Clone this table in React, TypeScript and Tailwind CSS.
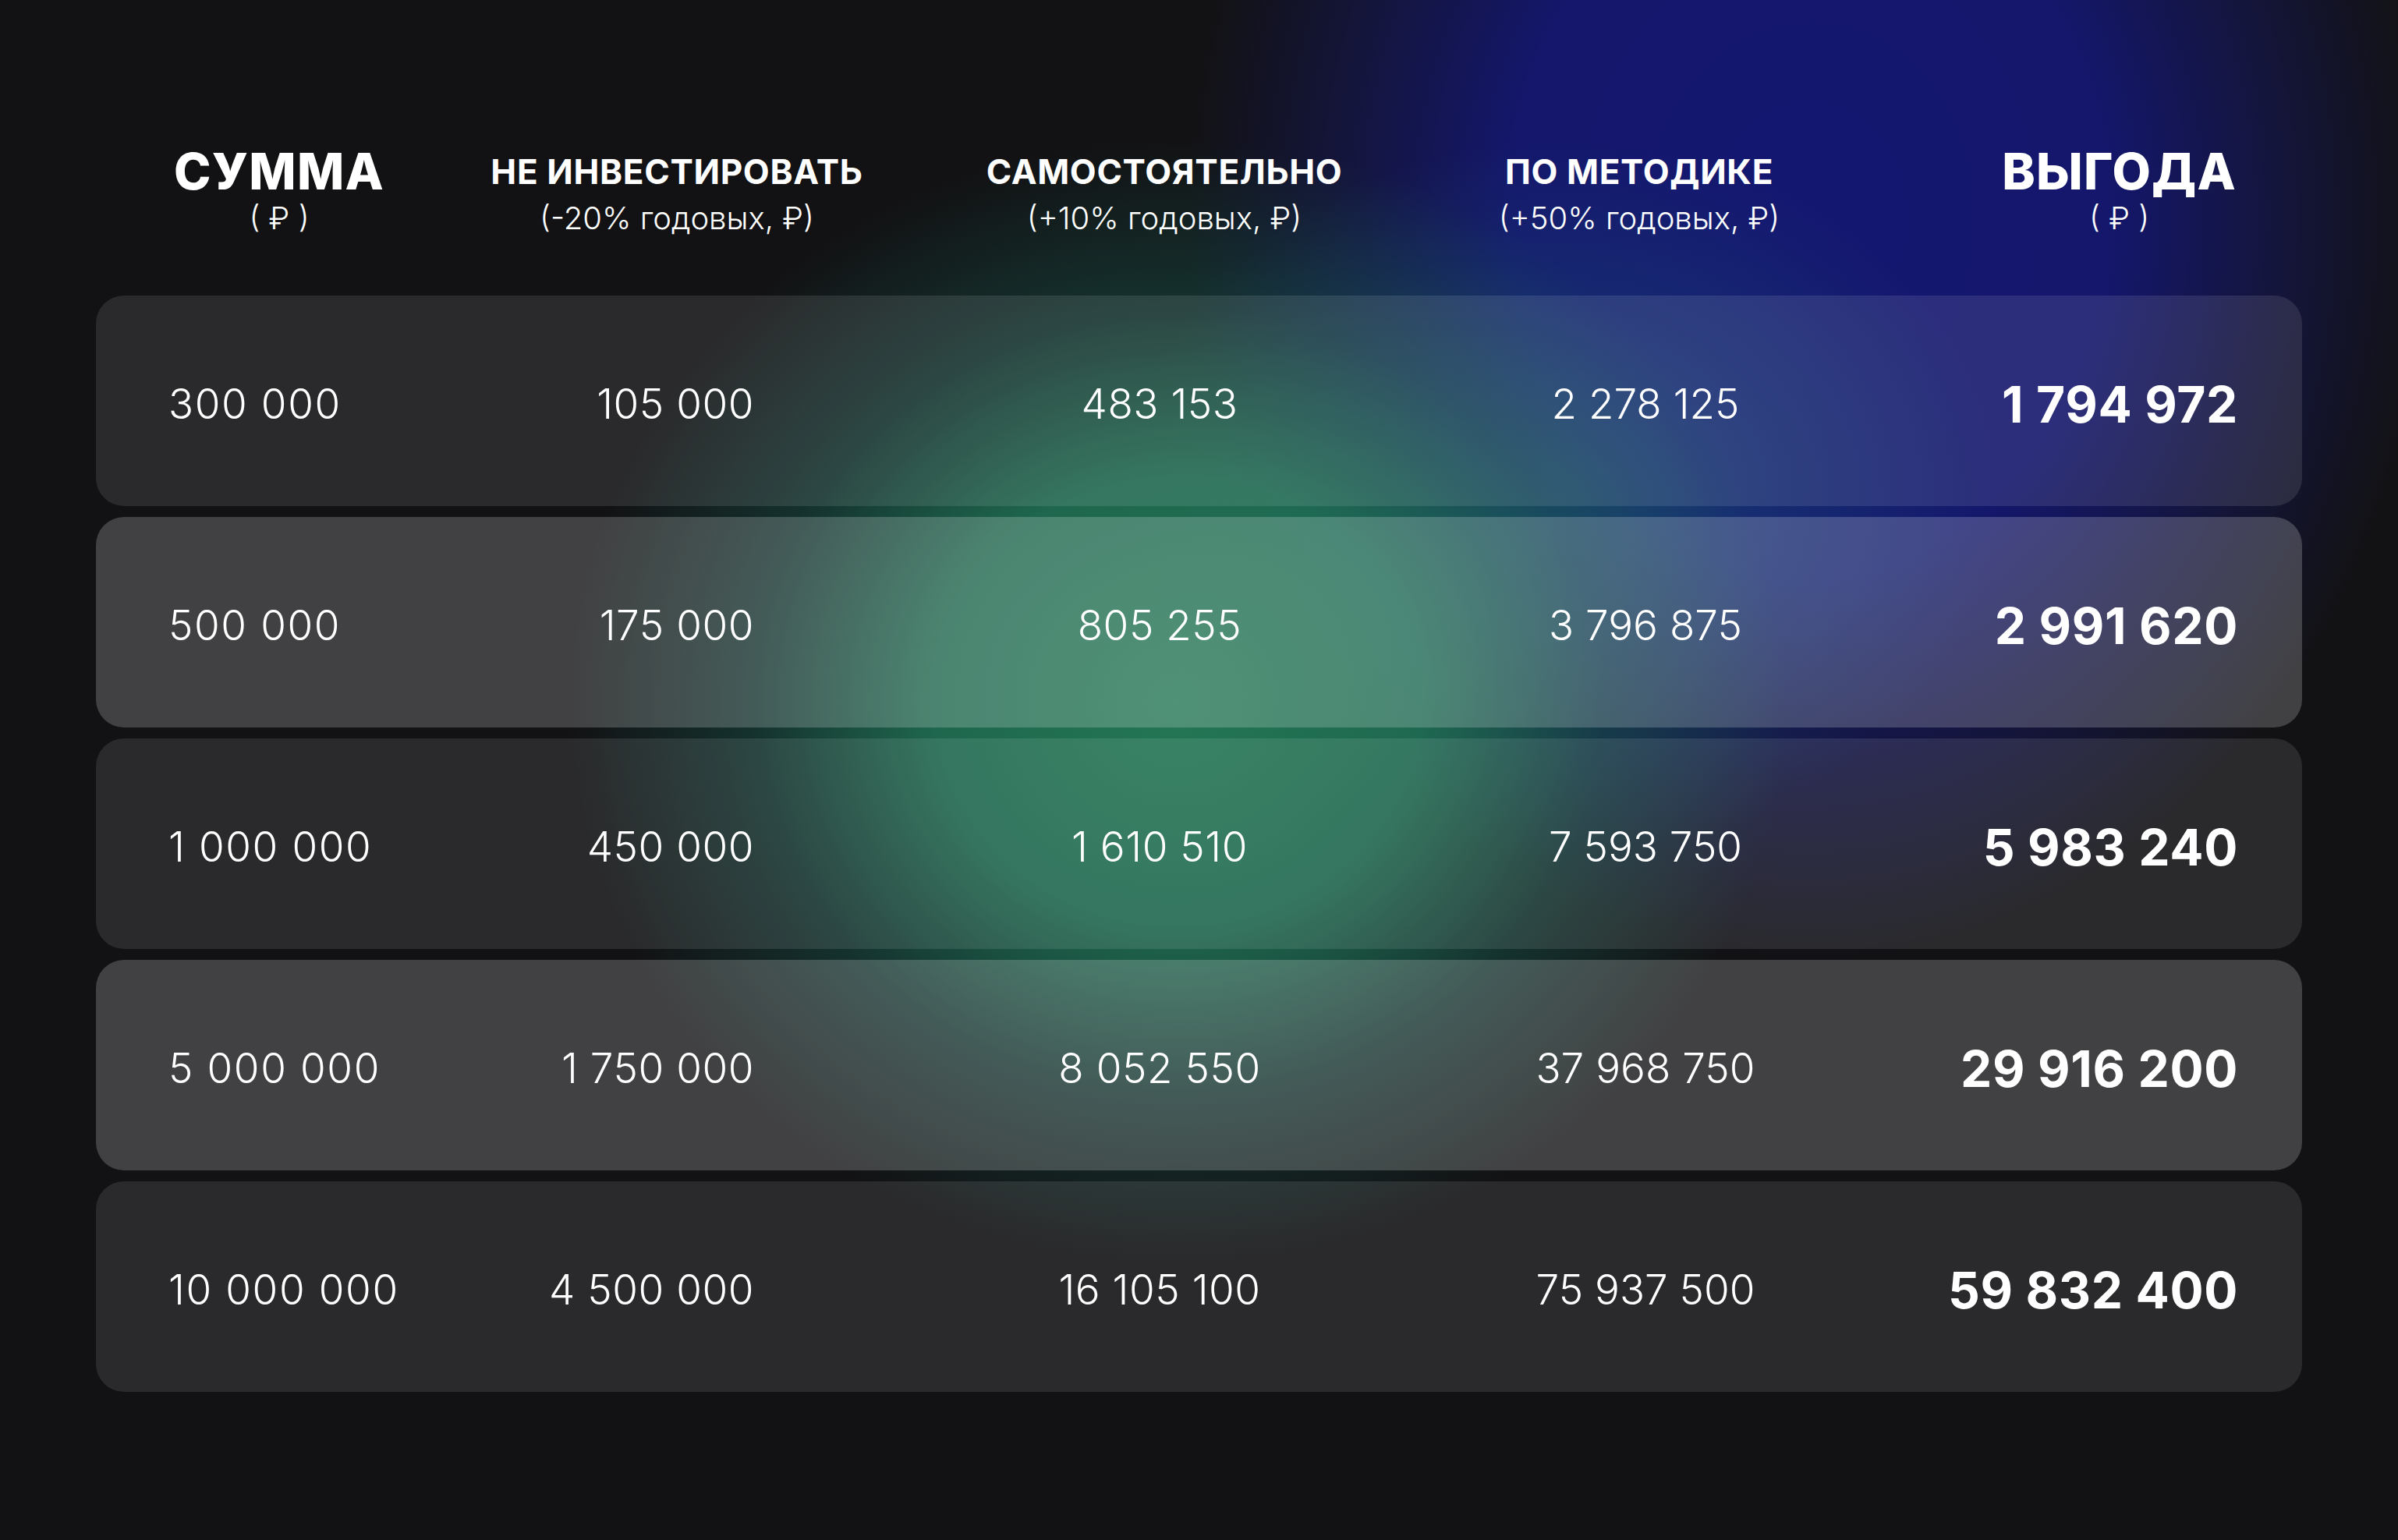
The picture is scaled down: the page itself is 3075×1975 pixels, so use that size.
import React from "react";

const rows: string[][] = [
  ["300 000", "105 000", "483 153", "2 278 125", "1 794 972"],
  ["500 000", "175 000", "805 255", "3 796 875", "2 991 620"],
  ["1 000 000", "450 000", "1 610 510", "7 593 750", "5 983 240"],
  ["5 000 000", "1 750 000", "8 052 550", "37 968 750", "29 916 200"],
  ["10 000 000", "4 500 000", "16 105 100", "75 937 500", "59 832 400"],
];

const grid = "grid grid-cols-[494px_560px_620px_620px_535px]";

function HeadCell({
  title,
  sub,
  big,
  className,
}: {
  title: string;
  sub: string;
  big?: boolean;
  className?: string;
}) {
  return (
    <div className={"flex flex-col items-center " + (className ?? "")}>
      <div
        className={
          big
            ? "text-[64px] font-extrabold leading-[60px] tracking-[0.02em] whitespace-nowrap"
            : "text-[44px] font-bold leading-[60px] tracking-[0.015em] whitespace-nowrap"
        }
      >
        {title}
      </div>
      <div className="text-[40px] font-light leading-[60px] whitespace-nowrap">{sub}</div>
    </div>
  );
}

export default function App() {
  return (
    <div className="w-full h-[1975px] overflow-hidden bg-[#121214] bg-[image:radial-gradient(ellipse_780px_720px_at_1510px_900px,rgba(36,124,88,0.95)_0%,rgba(33,118,88,0.85)_40%,rgba(24,88,78,0.45)_70%,rgba(18,18,20,0)_100%),radial-gradient(ellipse_560px_460px_at_2000px_640px,rgba(30,95,125,0.55)_0%,rgba(30,95,125,0)_100%),radial-gradient(ellipse_800px_960px_at_2320px_280px,rgba(20,23,112,1)_0%,rgba(20,23,112,0.95)_48%,rgba(22,24,96,0.5)_76%,rgba(18,18,20,0)_100%)] text-white font-[family-name:Inter,sans-serif]">
      <div className={"mx-auto w-[2829px] pt-[190px] " + grid}>
        <HeadCell title="СУММА" sub="( ₽ )" big className="pr-[24px]" />
        <HeadCell title="НЕ ИНВЕСТИРОВАТЬ" sub="(-20% годовых, ₽)" className="pr-[58px]" />
        <HeadCell title="САМОСТОЯТЕЛЬНО" sub="(+10% годовых, ₽)" className="pl-[12px]" />
        <HeadCell title="ПО МЕТОДИКЕ" sub="(+50% годовых, ₽)" className="pr-[10px]" />
        <div className="flex justify-end pr-[84px]">
          <HeadCell title="ВЫГОДА" sub="( ₽ )" big />
        </div>
      </div>

      <div className="mx-auto w-[2829px] mt-[69px] flex flex-col gap-[14px]">
        {rows.map((r, i) => (
          <div
            key={i}
            className={
              grid +
              " h-[270px] items-center rounded-[36px] pt-[10px] " +
              (i % 2 === 1 ? "bg-white/[0.2]" : "bg-white/[0.1]")
            }
          >
            <div className="pl-[93px] text-[53px] font-light tracking-[0.03em] whitespace-nowrap">{r[0]}</div>
            <div className="pr-[210px] text-right text-[53px] font-light tracking-[0.01em] whitespace-nowrap">{r[1]}</div>
            <div className="text-center text-[53px] font-light tracking-[0.01em] whitespace-nowrap">{r[2]}</div>
            <div className="pl-[6px] text-center text-[53px] font-light whitespace-nowrap">{r[3]}</div>
            <div className="pr-[82px] text-right text-[64px] font-bold tracking-[0.01em] whitespace-nowrap">{r[4]}</div>
          </div>
        ))}
      </div>
    </div>
  );
}
